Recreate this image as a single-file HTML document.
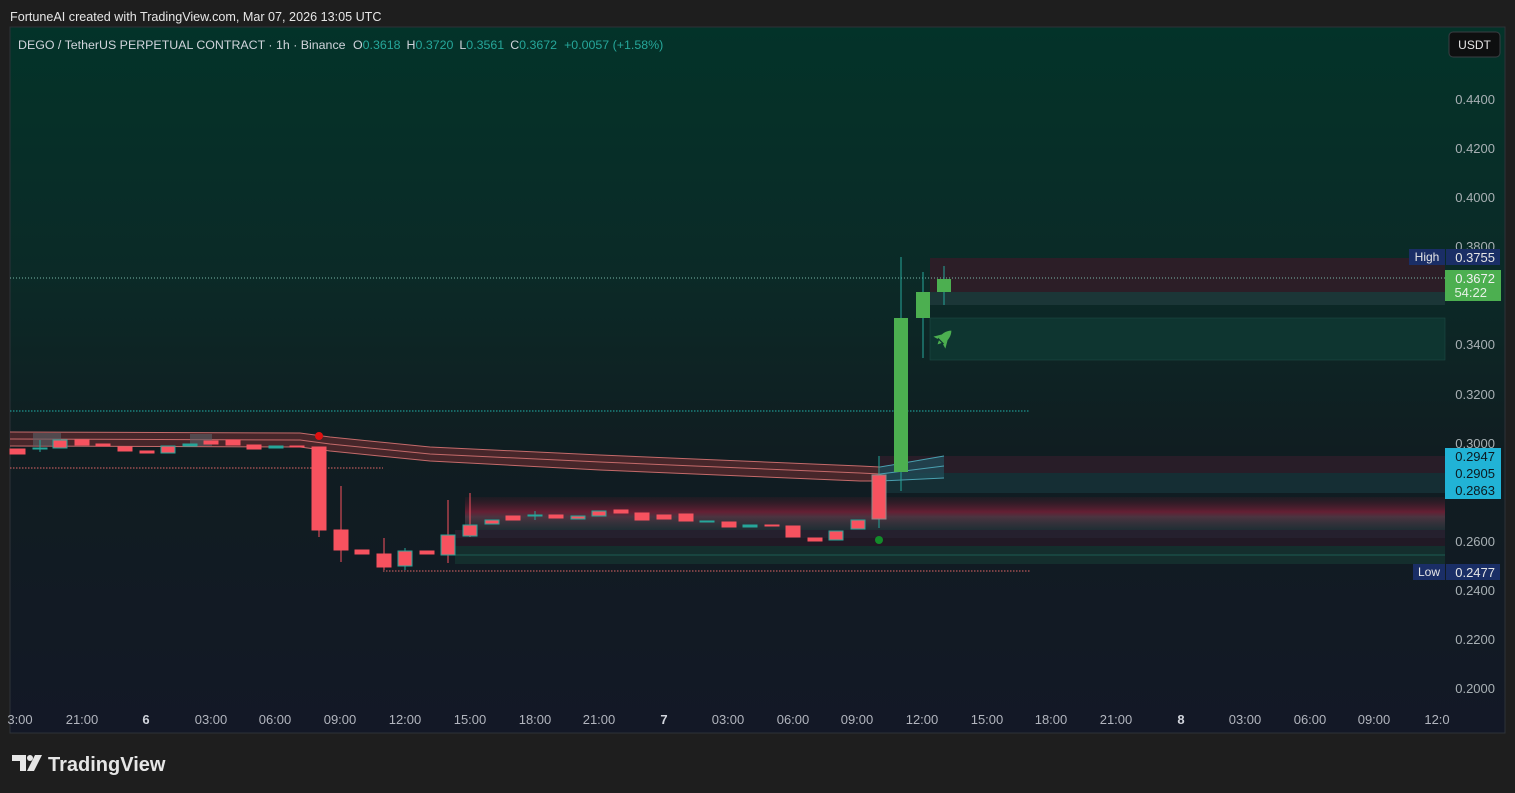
<!DOCTYPE html>
<html><head><meta charset="utf-8"><style>
html,body{margin:0;padding:0;background:#1e1e1e;width:1515px;height:793px;overflow:hidden}
svg{display:block}
text{font-family:"Liberation Sans",sans-serif}
</style></head><body>
<svg width="1515" height="793" viewBox="0 0 1515 793" xmlns="http://www.w3.org/2000/svg">
<defs>
<linearGradient id="bg" x1="0" y1="0" x2="0" y2="1">
<stop offset="0" stop-color="#033329"/>
<stop offset="0.35" stop-color="#0b2a27"/>
<stop offset="0.6" stop-color="#101d21"/>
<stop offset="1" stop-color="#131826"/>
</linearGradient>
<linearGradient id="pk" x1="0" y1="0" x2="0" y2="1">
<stop offset="0" stop-color="#3a1a26" stop-opacity="0.3"/>
<stop offset="0.45" stop-color="#7a2038" stop-opacity="0.8"/>
<stop offset="0.6" stop-color="#5a3a48" stop-opacity="0.8"/>
<stop offset="1" stop-color="#2a3a40" stop-opacity="0.6"/>
</linearGradient>
</defs>
<rect width="1515" height="793" fill="#1e1e1e"/>
<text x="10" y="21" font-size="12.6" fill="#e6e6e6">FortuneAI created with TradingView.com, Mar 07, 2026 13:05 UTC</text>
<rect x="10" y="27" width="1495" height="706" fill="url(#bg)" stroke="#2e3238"/>
<text x="18" y="49" font-size="12.4" fill="#d1d4dc">DEGO / TetherUS PERPETUAL CONTRACT · 1h · Binance <tspan dx="4">O</tspan><tspan fill="#26a69a">0.3618</tspan><tspan dx="6">H</tspan><tspan fill="#26a69a">0.3720</tspan><tspan dx="6">L</tspan><tspan fill="#26a69a">0.3561</tspan><tspan dx="6">C</tspan><tspan fill="#26a69a">0.3672</tspan><tspan dx="7" fill="#26a69a">+0.0057 (+1.58%)</tspan></text>
<rect x="1449" y="32" width="51" height="25" rx="4" fill="#0e0f10" stroke="#3a3d42"/>
<text x="1474.5" y="49" font-size="12" fill="#e6e6e6" text-anchor="middle">USDT</text>
<g font-size="13" fill="#a8b0b4" text-anchor="end">
<text x="1495" y="104">0.4400</text><text x="1495" y="153">0.4200</text><text x="1495" y="202">0.4000</text><text x="1495" y="251">0.3800</text>
<text x="1495" y="349">0.3400</text><text x="1495" y="399">0.3200</text><text x="1495" y="448">0.3000</text>
<text x="1495" y="546">0.2600</text><text x="1495" y="595">0.2400</text><text x="1495" y="644">0.2200</text><text x="1495" y="693">0.2000</text>
</g>
<rect x="930" y="258" width="515" height="34" fill="#3a1a28" opacity="0.7"/>
<rect x="930" y="292" width="515" height="13" fill="#1f3a3c" opacity="0.8"/>
<rect x="930" y="318" width="515" height="42" fill="#0e3530" stroke="#1d4a44" stroke-width="0.6"/>
<rect x="880" y="456" width="565" height="17" fill="#2e1e2a" opacity="0.8"/>
<rect x="880" y="473" width="565" height="20" fill="#17333a" opacity="0.8"/>
<rect x="465" y="497" width="980" height="33" fill="url(#pk)"/>
<rect x="455" y="530" width="990" height="8" fill="#2b2232" opacity="0.8"/>
<rect x="455" y="538" width="990" height="8" fill="#281826" opacity="0.7"/>
<rect x="455" y="546" width="990" height="18" fill="#153330" opacity="0.8"/>
<line x1="455" y1="555" x2="1445" y2="555" stroke="#1b5c52" stroke-width="1"/>
<line x1="10" y1="411" x2="1030" y2="411" stroke="#20b0a8" stroke-dasharray="1.5 1.5" stroke-width="1"/>
<line x1="10" y1="468" x2="383" y2="468" stroke="#e06666" stroke-dasharray="1.5 1.5"/>
<line x1="383" y1="571" x2="1030" y2="571" stroke="#e06666" stroke-dasharray="1.5 1.5"/>
<line x1="10" y1="278" x2="1445" y2="278" stroke="#7ab8a8" stroke-dasharray="1 2"/>
<path d="M10 432 L300 433 L330 437 L430 447 L600 455 L860 466 L880 467 L880 481 L860 481 L600 470 L430 461 L330 451 L300 447 L10 446 Z" fill="#5a2a2e" opacity="0.75"/>
<path d="M10 432 L300 433 L330 437 L430 447 L600 455 L860 466 L880 467" stroke="#c46a6a" fill="none" stroke-width="1"/>
<path d="M10 439 L300 440 L330 444 L430 454 L600 462 L860 473 L880 474" stroke="#c46a6a" fill="none" stroke-width="1"/>
<path d="M10 446 L300 447 L330 451 L430 461 L600 470 L860 481 L880 481" stroke="#c46a6a" fill="none" stroke-width="1"/>
<path d="M880 467 L944 456 L944 478 L880 481 Z" fill="#1f4a55" opacity="0.8"/>
<path d="M880 467 L944 456 M880 474 L944 466 M880 481 L944 478" stroke="#4aa0b0" stroke-width="1"/>
<rect x="33" y="433" width="28" height="13" fill="#5a6068" opacity="0.6"/>
<rect x="190" y="434" width="22" height="12" fill="#5a6068" opacity="0.6"/>
<g stroke-width="1">
<g fill="#f7525f" stroke="#f7525f">
<rect x="10" y="449" width="15" height="5"/>
<rect x="53" y="440" width="14" height="8" stroke="#26a69a"/>
<rect x="75" y="440" width="14" height="5"/>
<rect x="96" y="444" width="14" height="2"/>
<rect x="118" y="447" width="14" height="4"/>
<rect x="140" y="451" width="14" height="2"/>
<rect x="161" y="446" width="14" height="7" stroke="#26a69a"/>
<rect x="204" y="441" width="14" height="3"/>
<rect x="226" y="440" width="14" height="5"/>
<rect x="247" y="445" width="14" height="4"/>
<line x1="319" y1="447" x2="319" y2="537"/><rect x="312" y="447" width="14" height="83"/>
<line x1="341" y1="486" x2="341" y2="562"/><rect x="334" y="530" width="14" height="20"/>
<rect x="355" y="550" width="14" height="4"/>
<line x1="384" y1="538" x2="384" y2="570"/><rect x="377" y="554" width="14" height="13"/>
<rect x="420" y="551" width="14" height="3"/>
<line x1="448" y1="500" x2="448" y2="563"/><rect x="441" y="535" width="14" height="20" stroke="#26a69a"/>
<line x1="470" y1="493" x2="470" y2="537"/><rect x="463" y="525" width="14" height="11" stroke="#26a69a"/>
<rect x="485" y="520" width="14" height="4" stroke="#26a69a"/>
<rect x="506" y="516" width="14" height="4"/>
<rect x="549" y="515" width="14" height="3"/>
<rect x="571" y="516" width="14" height="3" stroke="#26a69a"/>
<rect x="592" y="511" width="14" height="5" stroke="#26a69a"/>
<rect x="614" y="510" width="14" height="3"/>
<rect x="635" y="513" width="14" height="7"/>
<rect x="657" y="515" width="14" height="4"/>
<rect x="679" y="514" width="14" height="7"/>
<rect x="722" y="522" width="14" height="5"/>
<rect x="765" y="525" width="14" height="1"/>
<rect x="786" y="526" width="14" height="11"/>
<rect x="808" y="538" width="14" height="3"/>
<rect x="829" y="531" width="14" height="9" stroke="#26a69a"/>
<rect x="851" y="520" width="14" height="9" stroke="#26a69a"/>
</g>
<g fill="#26a69a" stroke="#26a69a">
<line x1="40" y1="440" x2="40" y2="452"/><rect x="33" y="448" width="14" height="1"/>
<rect x="183" y="444" width="14" height="2"/>
<rect x="269" y="446" width="14" height="2"/>
<rect x="290" y="446" width="14" height="1" fill="#f7525f" stroke="#f7525f"/>
<line x1="405" y1="548" x2="405" y2="570"/><rect x="398" y="551" width="14" height="15" fill="#f7525f"/>
<line x1="535" y1="511" x2="535" y2="520"/><rect x="528" y="515" width="14" height="1"/>
<rect x="700" y="521" width="14" height="1"/>
<rect x="743" y="525" width="14" height="2"/>
</g>
<line x1="879" y1="456" x2="879" y2="528" stroke="#26a69a"/>
<rect x="872" y="475" width="14" height="44" fill="#f7525f" stroke="#8a8a8a"/>
<line x1="901" y1="257" x2="901" y2="491" stroke="#26a69a"/>
<rect x="894" y="318" width="14" height="154" fill="#4caf50"/>
<line x1="923" y1="272" x2="923" y2="358" stroke="#26a69a"/>
<rect x="916" y="292" width="14" height="26" fill="#4caf50"/>
<line x1="944" y1="266" x2="944" y2="305" stroke="#26a69a"/>
<rect x="937" y="279" width="14" height="13" fill="#4caf50"/>
</g>
<ellipse cx="319" cy="436" rx="4" ry="4" fill="#e01010"/>
<ellipse cx="879" cy="540" rx="4" ry="4" fill="#138a2a"/>
<g transform="translate(944,338) rotate(45) scale(1.3)" fill="#4caf50">
<path d="M0 -8 C3 -5 3.5 -1 3 3 L-3 3 C-3.5 -1 -3 -5 0 -8 Z"/>
<path d="M-3 -1 L-6.5 5 L-3 4 Z M3 -1 L6.5 5 L3 4 Z M-1.5 4 L1.5 4 L0 7 Z"/>
</g>
<rect x="1409" y="249" width="36" height="16" fill="#1a2e66"/>
<text x="1427" y="261" font-size="12" fill="#e6e6e6" text-anchor="middle">High</text>
<rect x="1446" y="249" width="54" height="16" fill="#1a2e66"/>
<text x="1495" y="262" font-size="13" fill="#e6e6e6" text-anchor="end">0.3755</text>
<rect x="1445" y="270" width="56" height="31" fill="#4caf50"/>
<text x="1495" y="283" font-size="13" fill="#f0f0f0" text-anchor="end">0.3672</text>
<text x="1487" y="297" font-size="13" fill="#e6f2e6" text-anchor="end">54:22</text>
<rect x="1445" y="448" width="56" height="51" fill="#21b3d6"/>
<g font-size="13" fill="#0c1a20" text-anchor="end">
<text x="1495" y="461">0.2947</text><text x="1495" y="478">0.2905</text><text x="1495" y="495">0.2863</text>
</g>
<rect x="1413" y="564" width="32" height="16" fill="#1a2e66"/>
<text x="1429" y="576" font-size="12" fill="#e6e6e6" text-anchor="middle">Low</text>
<rect x="1446" y="564" width="54" height="16" fill="#1a2e66"/>
<text x="1495" y="577" font-size="13" fill="#e6e6e6" text-anchor="end">0.2477</text>
<g font-size="13" fill="#b2b5be" text-anchor="middle">
<text x="20" y="724">3:00</text><text x="82" y="724">21:00</text><text x="146" y="724" font-weight="bold" fill="#d1d4dc">6</text>
<text x="211" y="724">03:00</text><text x="275" y="724">06:00</text><text x="340" y="724">09:00</text><text x="405" y="724">12:00</text>
<text x="470" y="724">15:00</text><text x="535" y="724">18:00</text><text x="599" y="724">21:00</text><text x="664" y="724" font-weight="bold" fill="#d1d4dc">7</text>
<text x="728" y="724">03:00</text><text x="793" y="724">06:00</text><text x="857" y="724">09:00</text><text x="922" y="724">12:00</text>
<text x="987" y="724">15:00</text><text x="1051" y="724">18:00</text><text x="1116" y="724">21:00</text><text x="1181" y="724" font-weight="bold" fill="#d1d4dc">8</text>
<text x="1245" y="724">03:00</text><text x="1310" y="724">06:00</text><text x="1374" y="724">09:00</text><text x="1437" y="724">12:0</text>
</g>
<g fill="#e6e6e6">
<path d="M12 755 H26 V771 H20 V761 H12 Z"/>
<circle cx="30" cy="758" r="3"/>
<path d="M35 755 H42 L34 771 H27 Z"/>
</g>
<text x="48" y="771" font-size="20" font-weight="bold" fill="#e6e6e6">TradingView</text>
</svg>
</body></html>
